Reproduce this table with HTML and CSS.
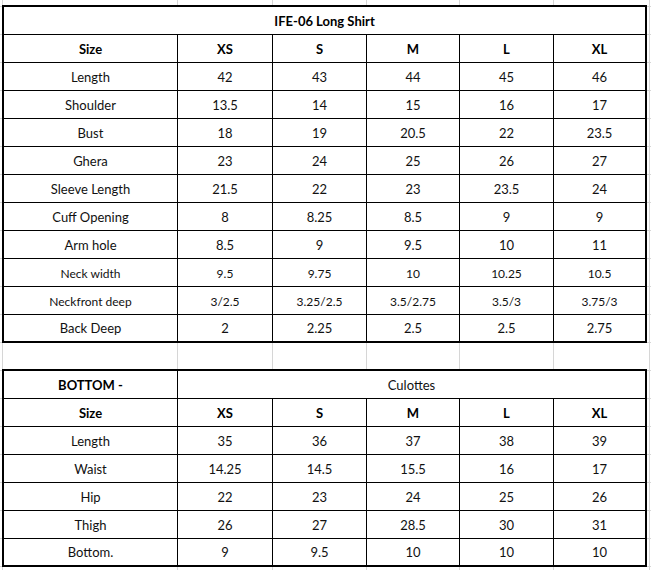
FILE: index.html
```html
<!DOCTYPE html>
<html lang="en">
<head>
<meta charset="utf-8">
<title>IFE-06 Long Shirt size chart</title>
<link rel="stylesheet" href="styles.css">
</head>
<body>
<div class="sheet">
  <table class="chart">
    <colgroup>
      <col class="c-label"><col class="c-xs"><col class="c-s"><col class="c-m"><col class="c-l"><col class="c-xl">
    </colgroup>
    <tr class="title"><td colspan="6">IFE-06 Long Shirt</td></tr>
    <tr class="head"><td>Size</td><td>XS</td><td>S</td><td>M</td><td>L</td><td>XL</td></tr>
    <tr><td>Length</td><td>42</td><td>43</td><td>44</td><td>45</td><td>46</td></tr>
    <tr><td>Shoulder</td><td>13.5</td><td>14</td><td>15</td><td>16</td><td>17</td></tr>
    <tr><td>Bust</td><td>18</td><td>19</td><td>20.5</td><td>22</td><td>23.5</td></tr>
    <tr><td>Ghera</td><td>23</td><td>24</td><td>25</td><td>26</td><td>27</td></tr>
    <tr><td>Sleeve Length</td><td>21.5</td><td>22</td><td>23</td><td>23.5</td><td>24</td></tr>
    <tr><td>Cuff Opening</td><td>8</td><td>8.25</td><td>8.5</td><td>9</td><td>9</td></tr>
    <tr><td>Arm hole</td><td>8.5</td><td>9</td><td>9.5</td><td>10</td><td>11</td></tr>
    <tr class="small"><td>Neck width</td><td>9.5</td><td>9.75</td><td>10</td><td>10.25</td><td>10.5</td></tr>
    <tr class="small"><td>Neckfront deep</td><td>3/2.5</td><td>3.25/2.5</td><td>3.5/2.75</td><td>3.5/3</td><td>3.75/3</td></tr>
    <tr><td>Back Deep</td><td>2</td><td>2.25</td><td>2.5</td><td>2.5</td><td>2.75</td></tr>
  </table>

  <table class="chart chart-second">
    <colgroup>
      <col class="c-label"><col class="c-xs"><col class="c-s"><col class="c-m"><col class="c-l"><col class="c-xl">
    </colgroup>
    <tr><td class="bold">BOTTOM -</td><td colspan="5">Culottes</td></tr>
    <tr class="head"><td>Size</td><td>XS</td><td>S</td><td>M</td><td>L</td><td>XL</td></tr>
    <tr><td>Length</td><td>35</td><td>36</td><td>37</td><td>38</td><td>39</td></tr>
    <tr><td>Waist</td><td>14.25</td><td>14.5</td><td>15.5</td><td>16</td><td>17</td></tr>
    <tr><td>Hip</td><td>22</td><td>23</td><td>24</td><td>25</td><td>26</td></tr>
    <tr><td>Thigh</td><td>26</td><td>27</td><td>28.5</td><td>30</td><td>31</td></tr>
    <tr><td>Bottom.</td><td>9</td><td>9.5</td><td>10</td><td>10</td><td>10</td></tr>
  </table>
</div>
</body>
</html>
```

FILE: styles.css
```css
html, body {
  margin: 0;
  padding: 0;
  background: #fff;
}

body {
  width: 651px;
  height: 570px;
  overflow: hidden;
  font-family: Lato, "Liberation Sans", Arial, sans-serif;
  font-size: 13px;
  color: #000;
}

.sheet {
  width: 651px;
  height: 570px;
  box-sizing: border-box;
  padding: 5px 0 0 2px;
  background-color: #fff;
  background-image:
    linear-gradient(#d6d6d6, #d6d6d6),
    linear-gradient(#d6d6d6, #d6d6d6),
    linear-gradient(#d6d6d6, #d6d6d6),
    linear-gradient(#d6d6d6, #d6d6d6),
    linear-gradient(#d6d6d6, #d6d6d6),
    linear-gradient(#d6d6d6, #d6d6d6),
    linear-gradient(#d6d6d6, #d6d6d6),
    linear-gradient(to bottom, #d6d6d6 1px, transparent 1px);
  background-size:
    1px 100%, 1px 100%, 1px 100%, 1px 100%, 1px 100%, 1px 100%, 1px 100%,
    100% 28px;
  background-position:
    2px 0, 177px 0, 272px 0, 366px 0, 459px 0, 553px 0, 649px 0,
    0 6px;
  background-repeat:
    no-repeat, no-repeat, no-repeat, no-repeat, no-repeat, no-repeat, no-repeat,
    repeat-y;
}

.chart {
  border-collapse: separate;
  border-spacing: 0;
  table-layout: fixed;
  width: 645px;
  border: 2px solid #000;
  background: #fff;
}

.chart-second {
  margin-top: 26px;
}

.c-label { width: 174px; }
.c-xs { width: 95px; }
.c-s { width: 94px; }
.c-m { width: 93px; }
.c-l { width: 94px; }
.c-xl { width: 91px; }

.chart td {
  box-sizing: border-box;
  height: 28px;
  padding: 1px 0 0;
  border-right: 1px solid #000;
  border-bottom: 1px solid #000;
  text-align: center;
  vertical-align: middle;
  white-space: nowrap;
  line-height: 15px;
  color: #111;
}

.chart td:last-child {
  border-right: 0;
}

.chart tr:last-child td {
  border-bottom: 0;
  height: 26px;
}

.title td,
.head td,
.chart td.bold {
  font-weight: bold;
  color: #000;
}

.small td {
  font-size: 12px;
}
```
